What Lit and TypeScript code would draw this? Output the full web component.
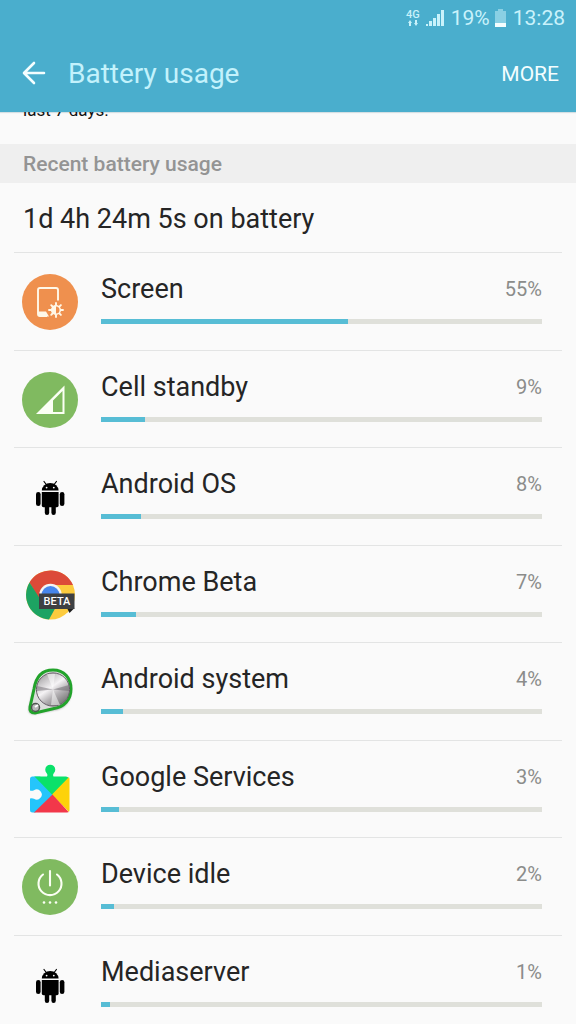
import { LitElement, html, css, svg, type TemplateResult } from "lit";
import { customElement, property } from "lit/decorators.js";
import { styleMap } from "lit/directives/style-map.js";

const icons: Record<string, TemplateResult> = {
  android: html`<svg viewBox="0 0 56 56" aria-hidden="true">
    <g fill="#000">
      <path d="M19.800 21.500a8.400 7.600 0 0 1 16.800 0z"/>
      <path d="M19.800 23h16.800v13.500q0 1.700-1.700 1.700H21.500q-1.700 0-1.700-1.700z"/>
      <rect x="14" y="23" width="4.600" height="14" rx="2.300"/>
      <rect x="37.800" y="23" width="4.600" height="14" rx="2.300"/>
      <rect x="22.800" y="33" width="4.400" height="13" rx="2.200"/>
      <rect x="29.400" y="33" width="4.400" height="13" rx="2.200"/>
    </g>
    <path d="M22 12.500l3 4M34.400 12.500l-3 4" stroke="#000" stroke-width="1.200" stroke-linecap="round"/>
    <circle cx="24.600" cy="18.600" r=".9" fill="#fafafa"/><circle cx="31.800" cy="18.600" r=".9" fill="#fafafa"/>
  </svg>`,
  screen: html`<svg viewBox="0 0 56 56" aria-hidden="true">
    <circle cx="28" cy="28" r="28" fill="#ef904e"/>
    <path d="M36 26.500V16q0-2-2-2H18q-2 0-2 2v24q0 2 2 2h7" fill="none" stroke="#fff8e8" stroke-width="1.900"/>
    <path d="M16 37.500h8l3 5H18q-2 0-2-2z" fill="#fff8e8"/>
    <g stroke="#fff8e8" stroke-width="1.900" stroke-linecap="round">
      <path d="M34 29v2M34 41v2M27 36h2M39 36h2M29.200 31.200l1.300 1.300M37.600 39.600l1.300 1.300M29.200 40.800l1.300-1.300M37.600 32.400l1.300-1.300"/>
    </g>
    <circle cx="34" cy="36" r="4.300" fill="#ef904e" stroke="#fff8e8" stroke-width="1.600"/>
    <path d="M34 31.500a4.500 4.500 0 0 0 0 9z" fill="#fff8e8"/>
  </svg>`,
  cell: html`<svg viewBox="0 0 56 56" aria-hidden="true">
    <circle cx="28" cy="28" r="28" fill="#80ba60"/>
    <path fill-rule="evenodd" d="M14 42L42.500 13.500V42zM31 28.500v11.500h9.500V19z" fill="#fbfff4"/>
  </svg>`,
  chrome: html`<svg viewBox="0 0 56 56" aria-hidden="true">
    <circle cx="28.500" cy="28" r="24.500" fill="#fccb3e"/>
    <path d="M7.500 15.500A24.500 24.500 0 0 1 51 18H28.500L18 34z" fill="#dc4a38"/>
    <path d="M7.500 15.500A24.500 24.500 0 0 0 27 52.500L35 38H22z" fill="#1da362"/>
    <circle cx="28.500" cy="28" r="11.200" fill="#f4f4f4"/>
    <circle cx="28.500" cy="28" r="9" fill="#4786ec"/>
    <path d="M45 41h7.500l-5 5z" fill="#1f1f1f"/>
    <path d="M17 26.500h35.500V42H17z" fill="#3e4043"/>
    <text x="35" y="38" text-anchor="middle" font-family="Roboto, sans-serif" font-size="11" font-weight="500" fill="#fff">BETA</text>
  </svg>`,
  system: html`<svg viewBox="0 0 56 56" aria-hidden="true">
    <defs>
      <linearGradient id="metal" x1="0" y1="0" x2=".7" y2="1">
        <stop offset="0" stop-color="#8b898b"/><stop offset=".28" stop-color="#c9c7c9"/>
        <stop offset=".5" stop-color="#f5f3f5"/><stop offset=".72" stop-color="#b5b2b5"/><stop offset="1" stop-color="#777"/>
      </linearGradient>
      <filter id="shade" x="-20%" y="-20%" width="140%" height="140%"><feGaussianBlur stdDeviation="1.300"/></filter>
    </defs>
    <path d="M11 27C13 14 20 7 31 7C43 7 50 15 49 27C48 39 42 45 32 46L12 50Q6 50 7 44Z" fill="#555" opacity=".6" filter="url(#shade)"/>
    <path d="M12 25C14 12 21 6 31 6C42 6 49 14 49 25C49 36 42 43 32 44.500L13 49Q7 49 8 43Z" fill="#dcdedc" stroke="#22a32b" stroke-width="3"/>
    <circle cx="31" cy="25.500" r="16.600" fill="url(#metal)" stroke="#665d67" stroke-width="1"/>
    <path d="M31 25.500L15 22v5zM31 25.500L47 21v6z" fill="#625d63" opacity=".45"/>
    <path d="M31 25.500L25 10h8zM31 25.500L29 41h9z" fill="#fff" opacity=".5"/>
    <circle cx="13.500" cy="43.500" r="4" fill="#b7b7b7" stroke="#4f5550" stroke-width="1.500"/>
    <path d="M13 43l3-2" stroke="#fff" stroke-width="2"/>
  </svg>`,
  services: html`<svg viewBox="0 0 56 56" aria-hidden="true">
    <defs><clipPath id="piece"><path d="M10.500 15.500H25q1-2-.5-3.500a5 5 0 1 1 7.500 0q-1.500 1.500-.5 3.500h13.500q2.500 0 2.500 2.500v31q0 2.500-2.500 2.500h-34.500q-2.500 0-2.500-2.500V37.500q2-.8 4 .2a5 5 0 1 0 0-8.400q-2 1-4 .2V18q0-2.500 2.500-2.500z"/></clipPath></defs>
    <g clip-path="url(#piece)" transform="translate(0 -1)">
      <path d="M8 15h10l14 18.500L13 52H8z" fill="#25c5fb"/>
      <path d="M12 15V0h32v15l3 2-16.500 17z" fill="#0ae16a"/>
      <path d="M48 15v37l-18-18.500z" fill="#fdd20a"/>
      <path d="M11 52.500l19.500-19L48 52.500z" fill="#f2374a"/>
    </g>
  </svg>`,
  idle: html`<svg viewBox="0 0 56 56" aria-hidden="true">
    <circle cx="28" cy="28" r="28" fill="#80ba60"/>
    <path d="M21 15.500a11.500 11.500 0 1 0 14 0M28 12v14.500" fill="none" stroke="#fbfff4" stroke-width="2.100" stroke-linecap="round"/>
    <g fill="#fbfff4"><circle cx="22" cy="43.500" r="1.300"/><circle cx="28" cy="43.500" r="1.300"/><circle cx="34" cy="43.500" r="1.300"/></g>
  </svg>`,
};

const networkArrows = svg`<path d="M1 3l2-3 2 3H4v3H2V3zM7 3h1V0h2v3h1L9 6z"/>`;

@customElement("usage-row")
class UsageRow extends LitElement {
  @property() name = "";
  @property() icon = "";
  @property({ type: Number }) percent = 0;

  static styles = css`
    :host {
      display: grid;
      grid-template-columns: 56px 1fr;
      column-gap: 23px;
      align-items: center;
      padding: 0 20px 0 8px;
      border-top: 1px solid #e3e4e4;
    }
    .icon svg { display: block; width: 56px; height: 56px; }
    .body { padding: 20px 0 26px; }
    .line { display: flex; justify-content: space-between; align-items: center; line-height: 32px; margin-bottom: 14px; }
    .name { font-size: 27px; color: #252525; }
    .percent { font-size: 20px; color: #8b8c8a; }
    .track { height: 5px; background: #dfe0da; }
    .fill { height: 100%; background: #57bdd5; }
  `;

  render() {
    const width = `${this.percent + 1}%`;
    return html`
      <div class="icon">${icons[this.icon]}</div>
      <div class="body">
        <div class="line"><span class="name">${this.name}</span><span class="percent">${this.percent}%</span></div>
        <div class="track" role="progressbar" aria-label=${this.name} aria-valuenow=${this.percent}>
          <div class="fill" style=${styleMap({ width })}></div>
        </div>
      </div>`;
  }
}

const usage = [
  { name: "Screen", icon: "screen", percent: 55 },
  { name: "Cell standby", icon: "cell", percent: 9 },
  { name: "Android OS", icon: "android", percent: 8 },
  { name: "Chrome Beta", icon: "chrome", percent: 7 },
  { name: "Android system", icon: "system", percent: 4 },
  { name: "Google Services", icon: "services", percent: 3 },
  { name: "Device idle", icon: "idle", percent: 2 },
  { name: "Mediaserver", icon: "android", percent: 1 },
];

@customElement("app-root")
class AppRoot extends LitElement {
  static styles = css`
    :host {
      display: flex;
      flex-direction: column;
      height: 100vh;
      overflow: hidden;
      background: #fafafa;
      font-family: Roboto, "Noto Sans", sans-serif;
    }
    .top { flex: none; background: #4aaecd; box-shadow: 0 1px 1px #d5dfe3; }
    .status { display: flex; justify-content: flex-end; align-items: center; height: 36px; padding: 0 11px; font-size: 21px; color: #c9f2fb; }
    .status svg { display: block; fill: #c9f2fb; }
    .network { display: flex; flex-direction: column; align-items: center; font-size: 11px; line-height: 10px; font-weight: 500; margin-right: 6px; }
    .signal { margin-right: 7px; }
    .cell { margin: 0 7px 0 5px; }
    .bar { display: flex; align-items: center; height: 76px; padding: 0 17px 0 20px; }
    button { border: 0; padding: 0; background: none; font: inherit; color: #f4feff; cursor: pointer; }
    .back { width: 28px; height: 28px; }
    .back svg { display: block; }
    h1 { flex: 1; margin: 0 0 0 20px; font-size: 28px; line-height: 36px; font-weight: 400; color: #c3f2fc; }
    .more { font-size: 21px; line-height: 28px; }
    .content { flex: 1; min-height: 0; overflow-y: auto; scrollbar-width: none; }
    .hint { display: flex; align-items: flex-end; height: 32px; overflow: hidden; padding: 0 23px 22px; box-sizing: border-box; }
    .hint p { margin: 0; font-size: 17px; line-height: 24px; color: #111; }
    h2 { margin: 0; padding: 2px 23px 0; font-size: 21px; line-height: 37px; font-weight: 500; color: #949494; background: #efefef; }
    .total { margin: 0; padding: 20px 23px 17px; font-size: 27px; line-height: 32px; color: #252525; }
    ul { list-style: none; margin: 0 14px; padding: 0; }
    li:nth-child(even) { margin-bottom: -1px; }
  `;

  render() {
    return html`
      <header class="top">
        <div class="status">
          <span class="network">4G
            <svg width="12" height="7" viewBox="0 0 12 7">${networkArrows}</svg>
          </span>
          <svg class="signal" width="18" height="18" viewBox="0 0 18 18"><path d="M0 15h2v2H0zM3 12h3v5H3zM7 9h3v8H7zM11 5h3v12h-3zM15 1h3v16h-3z"/></svg>
          <span>19%</span>
          <svg class="cell" width="11" height="18" viewBox="0 0 11 18"><path d="M3 0h5v2h3v12H0V2h3z" opacity=".5"/><path d="M0 14h11v4H0z" fill="#f4feff"/></svg>
          <span>13:28</span>
        </div>
        <div class="bar">
          <button class="back" aria-label="Back">
            <svg width="28" height="28" viewBox="0 0 28 28" fill="none" stroke="#f4feff" stroke-width="2.600" stroke-linecap="round" stroke-linejoin="round"><path d="M14 3L4 13l10 10M4.500 13H24"/></svg>
          </button>
          <h1>Battery usage</h1>
          <button class="more">MORE</button>
        </div>
      </header>
      <main class="content">
        <div class="hint"><p>last 7 days.</p></div>
        <h2>Recent battery usage</h2>
        <p class="total">1d 4h 24m 5s on battery</p>
        <ul>
          ${usage.map((u) => html`<li><usage-row .name=${u.name} .icon=${u.icon} .percent=${u.percent}></usage-row></li>`)}
        </ul>
      </main>`;
  }
}
